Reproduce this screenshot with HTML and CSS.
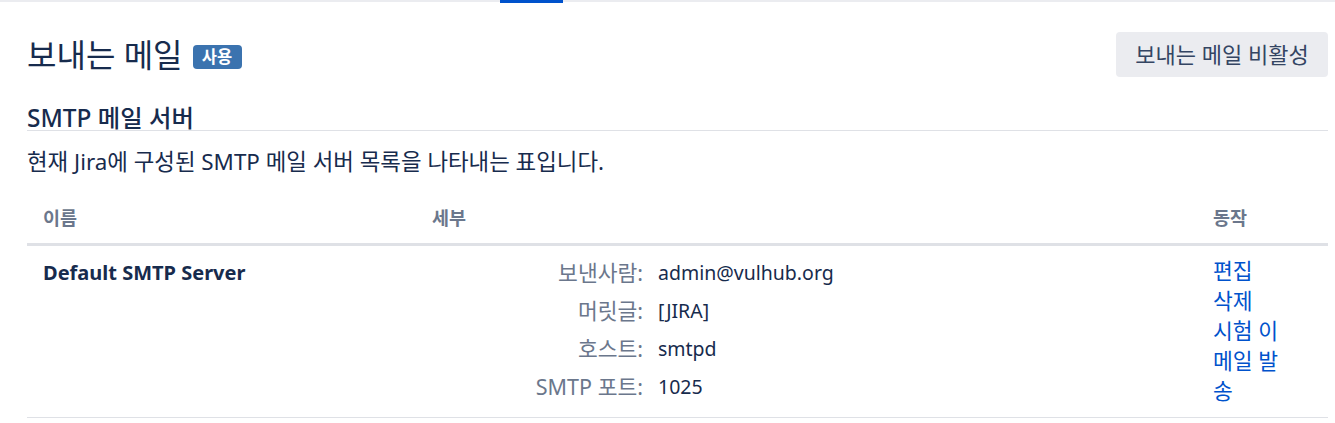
FILE: index.html
```html
<!DOCTYPE html>
<html lang="ko">
<head>
<meta charset="utf-8">
<title>보내는 메일</title>
<link rel="stylesheet" href="styles.css">
</head>
<body>
<div class="tabbar"><div class="tab-spacer"></div><div class="tab-active"></div></div>
<main class="page">
  <header class="page-header">
    <div class="title-group">
      <h1 class="title">보내는 메일</h1>
      <span class="lozenge">사용</span>
    </div>
    <button class="btn">보내는 메일 비활성</button>
  </header>
  <h2 class="section-title">SMTP 메일 서버</h2>
  <p class="desc">현재 Jira에 구성된 SMTP 메일 서버 목록을 나타내는 표입니다.</p>
  <div class="table">
    <div class="thead">
      <div class="th col-name">이름</div>
      <div class="th col-details">세부</div>
      <div class="th col-actions">동작</div>
    </div>
    <div class="trow">
      <div class="td col-name server-name">Default SMTP Server</div>
      <div class="td col-details">
        <dl class="details">
          <dt>보낸사람:</dt><dd>admin@vulhub.org</dd>
          <dt>머릿글:</dt><dd>[JIRA]</dd>
          <dt>호스트:</dt><dd>smtpd</dd>
          <dt>SMTP 포트:</dt><dd>1025</dd>
        </dl>
      </div>
      <div class="td col-actions">
        <ul class="actions">
          <li><a href="#">편집</a></li>
          <li><a href="#">삭제</a></li>
          <li><a href="#">시험 이메일 발송</a></li>
        </ul>
      </div>
    </div>
  </div>
</main>
</body>
</html>
```

FILE: styles.css
```css
* { box-sizing: border-box; }
body {
  margin: 0;
  font-family: "Noto Sans", "Noto Sans CJK KR", sans-serif;
  color: #172b4d;
  background: #fff;
}
.tabbar {
  display: flex;
  height: 2px;
  background: #ebecf0;
  overflow: visible;
}
.tab-spacer { width: 500px; }
.tab-active { width: 63px; height: 3px; background: #0052cc; }

.page { padding: 0 7px 0 27px; }

.page-header {
  display: flex;
  align-items: center;
  justify-content: space-between;
  margin-top: 30px;
  height: 45px;
}
.title-group { display: flex; align-items: center; gap: 10px; }
.title {
  margin: 0;
  font-size: 32px;
  font-weight: 400;
  line-height: 38px;
  color: #172b4d;
}
.lozenge {
  display: inline-flex;
  align-items: center;
  justify-content: center;
  width: 49px;
  height: 24px;
  margin-top: 4px;
  border-radius: 4px;
  background: #3b73af;
  color: #fff;
  font-size: 16.5px;
  font-weight: 700;
  line-height: 24px;
}
.btn {
  width: 212px;
  height: 45px;
  border: 0;
  border-radius: 4px;
  background: #ebecf0;
  color: #344563;
  font-family: inherit;
  font-size: 22px;
  line-height: 45px;
  padding: 0;
}

.section-title {
  margin: 28px 0 0;
  font-size: 24.4px;
  font-weight: 500;
  line-height: 25px;
  border-bottom: 1px solid #dfe1e6;
}
.desc {
  margin: 16px 0 0;
  font-size: 22.4px;
  line-height: 30px;
}

.table { margin-top: 16px; }
.thead, .trow {
  display: grid;
  grid-template-columns: 389px 781px 131px;
}
.thead { border-bottom: 3px solid #dfe1e6; }
.trow { border-bottom: 1px solid #dfe1e6; }
.th, .td { padding: 10px 16px; }
.th {
  font-size: 18.5px;
  font-weight: 700;
  line-height: 30px;
  color: #6b778c;
}
.td { line-height: 30px; }
.col-actions.td { padding-bottom: 11px; }
.server-name {
  font-size: 20px;
  font-weight: 700;
  padding-top: 12px;
}
.details {
  margin: 0;
  display: grid;
  grid-template-columns: 211px auto;
  column-gap: 15px;
  row-gap: 8px;
  line-height: 30px;
  padding-top: 2px;
}
.details dt { text-align: right; color: #6b778c; font-size: 21.5px; }
.details dd { margin: 0; color: #172b4d; font-size: 19.5px; }
.actions {
  margin: 0;
  padding: 0;
  list-style: none;
  width: 72px;
  font-size: 21.5px;
  line-height: 30px;
}
.actions a { color: #0052cc; text-decoration: none; }
```
